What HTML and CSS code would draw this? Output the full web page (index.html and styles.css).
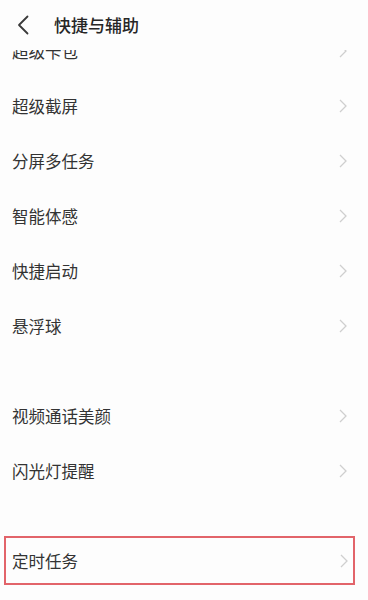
FILE: index.html
```html
<!DOCTYPE html>
<html>
<head>
    <meta charset="utf-8">
    <title>快捷与辅助</title>
    <link rel="stylesheet" href="styles.css">
</head>
<body>
    <div class="header">
        <svg class="back" width="12" height="20" viewBox="0 0 12 20">
            <polyline points="10.5,1.5 2,10 10.5,18.5" fill="none" stroke="#3a3a3a" stroke-width="1.8" stroke-linecap="round" stroke-linejoin="round"/>
        </svg>
        <span class="title">快捷与辅助</span>
    </div>

    <div class="list">
        <div class="row first"><span>超级卡包</span><svg class="arrow" width="8" height="14" viewBox="0 0 8 14"><polyline points="1,1 7,7 1,13" fill="none" stroke="#cfcfcf" stroke-width="1.3"/></svg></div>
        <div class="row"><span>超级截屏</span><svg class="arrow" width="8" height="14" viewBox="0 0 8 14"><polyline points="1,1 7,7 1,13" fill="none" stroke="#cfcfcf" stroke-width="1.3"/></svg></div>
        <div class="row"><span>分屏多任务</span><svg class="arrow" width="8" height="14" viewBox="0 0 8 14"><polyline points="1,1 7,7 1,13" fill="none" stroke="#cfcfcf" stroke-width="1.3"/></svg></div>
        <div class="row"><span>智能体感</span><svg class="arrow" width="8" height="14" viewBox="0 0 8 14"><polyline points="1,1 7,7 1,13" fill="none" stroke="#cfcfcf" stroke-width="1.3"/></svg></div>
        <div class="row"><span>快捷启动</span><svg class="arrow" width="8" height="14" viewBox="0 0 8 14"><polyline points="1,1 7,7 1,13" fill="none" stroke="#cfcfcf" stroke-width="1.3"/></svg></div>
        <div class="row"><span>悬浮球</span><svg class="arrow" width="8" height="14" viewBox="0 0 8 14"><polyline points="1,1 7,7 1,13" fill="none" stroke="#cfcfcf" stroke-width="1.3"/></svg></div>

        <div class="group">
            <div class="row"><span>视频通话美颜</span><svg class="arrow" width="8" height="14" viewBox="0 0 8 14"><polyline points="1,1 7,7 1,13" fill="none" stroke="#cfcfcf" stroke-width="1.3"/></svg></div>
            <div class="row"><span>闪光灯提醒</span><svg class="arrow" width="8" height="14" viewBox="0 0 8 14"><polyline points="1,1 7,7 1,13" fill="none" stroke="#cfcfcf" stroke-width="1.3"/></svg></div>
        </div>

        <div class="group last">
            <div class="row marked"><span>定时任务</span><svg class="arrow" width="8" height="14" viewBox="0 0 8 14"><polyline points="1,1 7,7 1,13" fill="none" stroke="#cfcfcf" stroke-width="1.3"/></svg></div>
        </div>
    </div>
</body>
</html>
```

FILE: styles.css
```css
body {
    margin: 0;
    background-color: #fdfdfd;
    font-family: "Noto Sans CJK SC", "Noto Sans", sans-serif;
    color: #333333;
}

.header {
    height: 50px;
    display: flex;
    align-items: center;
    padding-left: 17px;
    background-color: #fdfdfd;
}

.back {
    margin-top: -1px;
}

.title {
    margin-left: 25px;
    font-size: 17px;
    font-weight: 500;
    color: #262626;
    margin-top: -2px;
}

.list {
    height: 550px;
    overflow: hidden;
}

.row {
    height: 55px;
    display: flex;
    align-items: center;
    justify-content: space-between;
    padding: 0 21px 0 12px;
    font-size: 16.5px;
}

.row.first {
    margin-top: -27px;
}

.group {
    margin-top: 35px;
}

.group.last {
    margin-top: 38px;
}

.row.marked {
    height: 45px;
    margin: 0 13px 0 4px;
    padding: 0 5px 0 6px;
    border: 2.5px solid #e2646a;
}
```
